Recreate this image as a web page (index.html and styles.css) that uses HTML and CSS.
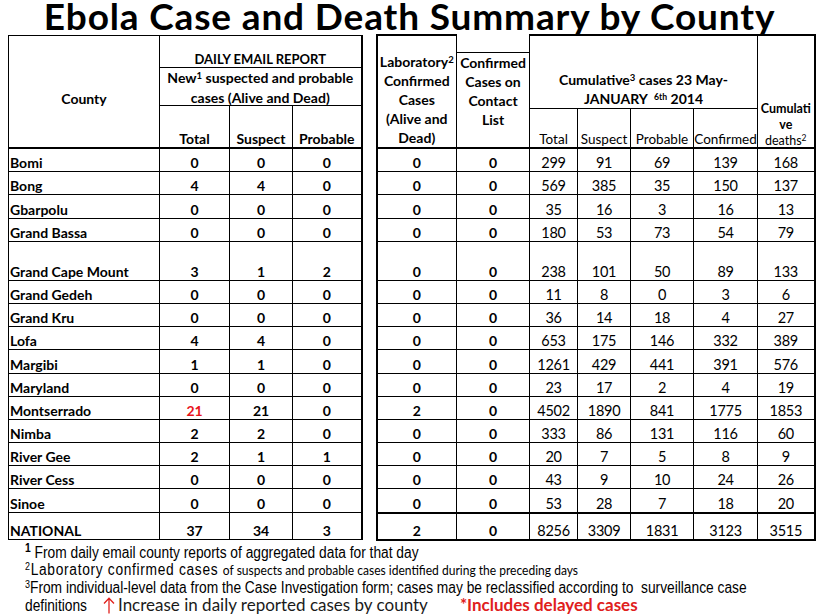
FILE: index.html
```html
<!DOCTYPE html>
<html>
<head>
<meta charset="utf-8">
<title>Ebola Case and Death Summary by County</title>
<link rel="stylesheet" href="styles.css">
</head>
<body>
<div class="page">
  <h1 class="title">Ebola Case and Death Summary by County</h1>
  <div class="tables">
    <table class="tbl left">
      <colgroup><col class="w151"><col class="w70"><col class="w63"><col class="w69"></colgroup>
      <thead>
        <tr class="hA"><th rowspan="3" class="county-h">County</th><th colspan="3" class="daily">DAILY EMAIL REPORT</th></tr>
        <tr class="hB"><th colspan="3" class="newcases"><div class="pull">New<sup>1</sup> suspected and probable<br>cases (Alive and Dead)</div></th></tr>
        <tr class="hC"><th class="sub">Total</th><th class="sub">Suspect</th><th class="sub edge">Probable</th></tr>
      </thead>
      <tbody>
        <tr><td class="name">Bomi</td><td>0</td><td>0</td><td class="edge">0</td></tr>
        <tr><td class="name">Bong</td><td>4</td><td>4</td><td class="edge">0</td></tr>
        <tr><td class="name">Gbarpolu</td><td>0</td><td>0</td><td class="edge">0</td></tr>
        <tr><td class="name">Grand Bassa</td><td>0</td><td>0</td><td class="edge">0</td></tr>
        <tr class="tall"><td class="name">Grand Cape Mount</td><td>3</td><td>1</td><td class="edge">2</td></tr>
        <tr><td class="name">Grand Gedeh</td><td>0</td><td>0</td><td class="edge">0</td></tr>
        <tr><td class="name">Grand Kru</td><td>0</td><td>0</td><td class="edge">0</td></tr>
        <tr><td class="name">Lofa</td><td>4</td><td>4</td><td class="edge">0</td></tr>
        <tr><td class="name">Margibi</td><td>1</td><td>1</td><td class="edge">0</td></tr>
        <tr><td class="name">Maryland</td><td>0</td><td>0</td><td class="edge">0</td></tr>
        <tr><td class="name">Montserrado</td><td class="red">21</td><td>21</td><td class="edge">0</td></tr>
        <tr><td class="name">Nimba</td><td>2</td><td>2</td><td class="edge">0</td></tr>
        <tr><td class="name">River Gee</td><td>2</td><td>1</td><td class="edge">1</td></tr>
        <tr><td class="name">River Cess</td><td>0</td><td>0</td><td class="edge">0</td></tr>
        <tr><td class="name">Sinoe</td><td>0</td><td>0</td><td class="edge">0</td></tr>
        <tr class="nat"><td class="name">NATIONAL</td><td>37</td><td>34</td><td class="edge">3</td></tr>
      </tbody>
    </table>

    <table class="tbl right">
      <colgroup><col class="w80"><col class="w73"><col class="w48"><col class="w53"><col class="w63"><col class="w64"><col class="w57"></colgroup>
      <thead>
        <tr class="hA2">
          <th rowspan="2" class="lab">Laboratory<sup>2</sup><br>Confirmed<br>Cases<br>(Alive and<br>Dead)</th>
          <th rowspan="2" class="contact"><div class="contact-in">Confirmed<br>Cases on<br>Contact<br>List</div></th>
          <th colspan="4" class="cum">Cumulative<sup>3</sup> cases 23 May-<br>JANUARY&nbsp; <sup class="th">6th</sup> 2014</th>
          <th rowspan="2" class="deaths"><div class="pull"><b>Cumulati<br>ve</b><br>deaths<sup>2</sup></div></th>
        </tr>
        <tr class="hB2"><th class="sub2">Total</th><th class="sub2">Suspect</th><th class="sub2">Probable</th><th class="sub2">Confirmed</th></tr>
      </thead>
      <tbody>
        <tr><td class="lab-c">0</td><td class="b">0</td><td>299</td><td>91</td><td>69</td><td>139</td><td class="rend">168</td></tr>
        <tr><td class="lab-c">0</td><td class="b">0</td><td>569</td><td>385</td><td>35</td><td>150</td><td class="rend">137</td></tr>
        <tr><td class="lab-c">0</td><td class="b">0</td><td>35</td><td>16</td><td>3</td><td>16</td><td class="rend">13</td></tr>
        <tr><td class="lab-c">0</td><td class="b">0</td><td>180</td><td>53</td><td>73</td><td>54</td><td class="rend">79</td></tr>
        <tr class="tall"><td class="lab-c">0</td><td class="b">0</td><td>238</td><td>101</td><td>50</td><td>89</td><td class="rend">133</td></tr>
        <tr><td class="lab-c">0</td><td class="b">0</td><td>11</td><td>8</td><td>0</td><td>3</td><td class="rend">6</td></tr>
        <tr><td class="lab-c">0</td><td class="b">0</td><td>36</td><td>14</td><td>18</td><td>4</td><td class="rend">27</td></tr>
        <tr><td class="lab-c">0</td><td class="b">0</td><td>653</td><td>175</td><td>146</td><td>332</td><td class="rend">389</td></tr>
        <tr><td class="lab-c">0</td><td class="b">0</td><td>1261</td><td>429</td><td>441</td><td>391</td><td class="rend">576</td></tr>
        <tr><td class="lab-c">0</td><td class="b">0</td><td>23</td><td>17</td><td>2</td><td>4</td><td class="rend">19</td></tr>
        <tr><td class="lab-c">2</td><td class="b">0</td><td>4502</td><td>1890</td><td>841</td><td>1775</td><td class="rend">1853</td></tr>
        <tr><td class="lab-c">0</td><td class="b">0</td><td>333</td><td>86</td><td>131</td><td>116</td><td class="rend">60</td></tr>
        <tr><td class="lab-c">0</td><td class="b">0</td><td>20</td><td>7</td><td>5</td><td>8</td><td class="rend">9</td></tr>
        <tr><td class="lab-c">0</td><td class="b">0</td><td>43</td><td>9</td><td>10</td><td>24</td><td class="rend">26</td></tr>
        <tr><td class="lab-c">0</td><td class="b">0</td><td>53</td><td>28</td><td>7</td><td>18</td><td class="rend">20</td></tr>
        <tr class="nat nat2"><td class="lab-c">2</td><td class="b">0</td><td>8256</td><td>3309</td><td>1831</td><td>3123</td><td class="rend">3515</td></tr>
      </tbody>
    </table>
  </div>

  <div class="notes">
    <div class="note cond"><sup class="n1">1</sup> From daily email county reports of aggregated data for that day</div>
    <div class="note cond"><span class="n2"><sup>2</sup>Laboratory confirmed cases </span><span class="small">of suspects and probable cases identified during the preceding days</span></div>
    <div class="note cond"><sup>3</sup>From individual-level data from the Case Investigation form; cases may be reclassified according to&nbsp; surveillance case</div>
    <div class="note last"><span class="narrow defs">definitions</span><svg class="arrow" width="12" height="17" viewBox="0 0 12 17"><path d="M6 16.5V1.5M1 6.5L6 1.2L11 6.5" fill="none" stroke="#e0201c" stroke-width="1.3"/></svg><span class="inc">Increase in daily reported cases by county</span><span class="delayed">*Includes delayed cases</span></div>
  </div>
</div>
</body>
</html>
```

FILE: styles.css
```css
html, body {
  margin: 0;
  padding: 0;
  background: #ffffff;
}

body {
  font-family: Lato, "Open Sans", sans-serif;
  color: #000000;
}

.page {
  width: 819px;
  height: 616px;
  overflow: hidden;
}

.title {
  margin: 0;
  height: 34px;
  font-size: 37px;
  line-height: 31px;
  font-weight: 700;
  text-align: center;
  letter-spacing: 0.85px;
  white-space: nowrap;
}

.tables {
  display: flex;
  align-items: flex-start;
  padding-left: 8px;
}

.tbl {
  border-collapse: collapse;
  table-layout: fixed;
  font-size: 14px;
}

.left {
  width: 353px;
  margin-top: 1px;
}

.right {
  width: 438px;
  margin-left: 13px;
}

.w151 { width: 151px; }
.w70 { width: 70px; }
.w63 { width: 63px; }
.w69 { width: 69px; }
.w80 { width: 80px; }
.w73 { width: 73px; }
.w48 { width: 48px; }
.w53 { width: 53px; }
.w64 { width: 64px; }
.w57 { width: 57px; }

.tbl th,
.tbl td {
  border: 1px solid #000;
  padding: 0;
  text-align: center;
  vertical-align: bottom;
  overflow: visible;
  white-space: nowrap;
}

.tbl sup {
  font-size: 0.68em;
  line-height: 0;
  vertical-align: 0.45em;
}

.pull {
  margin-bottom: -2px;
}

/* left table header */
.hA th { height: 31px; }
.hB th { height: 37px; }
.hC th { height: 41px; border-bottom: 2px solid #000; }

.county-h {
  vertical-align: top !important;
  padding-top: 54px !important;
  font-size: 14px;
  border-bottom: 2px solid #000 !important;
}

.daily {
  font-size: 13px;
  line-height: 16px;
}

.newcases {
  font-size: 14px;
  line-height: 19.5px;
}

.sub {
  font-size: 14px;
  line-height: 16px;
}

.left .edge { border-right: 2px solid #000; }
.left th.daily, .left th.newcases { border-right: 2px solid #000; }

.left td {
  height: 22.2px;
  font-weight: 700;
  line-height: 16px;
}

.left td.name {
  text-align: left;
  padding-left: 1px;
}

.tall td { height: 38px !important; }
.nat td { height: 25px !important; }
.left .nat td { height: 26px !important; }

.red { color: #e8141c; }

/* right table header */
.hA2 th {
  height: 72px;
  border-top: 2px solid #000;
}
.hB2 th {
  height: 38px;
  border-bottom: 2px solid #000;
}

.lab {
  font-size: 14px;
  line-height: 19px;
  border-left: 2px solid #000 !important;
  border-bottom: 2px solid #000 !important;
}

.contact {
  vertical-align: top !important;
  border-top: none !important;
  border-bottom: 2px solid #000 !important;
  font-size: 14px;
  line-height: 19px;
}

.contact-in {
  margin-top: 17px;
  border-top: 1px solid #000;
}

.cum {
  font-size: 14px;
  line-height: 19px;
}

.cum .th {
  font-size: 0.62em;
  vertical-align: 0.5em;
}

.sub2 {
  font-weight: 400;
  font-size: 13.5px;
  line-height: 16px;
}

.deaths {
  font-weight: 400;
  font-size: 12.5px;
  line-height: 16px;
  border-right: 2px solid #000 !important;
  border-bottom: 2px solid #000 !important;
}

.right td {
  height: 22.2px;
  line-height: 16px;
  font-size: 14.5px;
  letter-spacing: -0.3px;
}

.right td.lab-c {
  border-left: 2px solid #000;
  font-weight: 700;
  font-size: 14px;
  letter-spacing: 0;
}

.right td.b {
  font-weight: 700;
  font-size: 14px;
  letter-spacing: 0;
}

.right td.rend { border-right: 2px solid #000; }

.nat2 td {
  border-top: 2px solid #000;
  border-bottom: 2px solid #000;
}

/* notes */
.notes {
  padding-left: 25px;
  margin-top: 3px;
  font-family: "Liberation Sans", Arial, sans-serif;
  font-size: 16px;
  line-height: 17.7px;
  white-space: nowrap;
}

.note {
  height: 17.7px;
}

.cond {
  transform: scaleX(0.86);
  transform-origin: 0 0;
}

.narrow {
  display: inline-block;
  transform: scaleX(0.86);
  transform-origin: 0 50%;
}

.note sup {
  font-size: 0.65em;
  line-height: 0;
  vertical-align: 0.5em;
}

.note .n1 {
  font-weight: 700;
  font-size: 0.75em;
}

.n2 {
  font-size: 16px;
  letter-spacing: 0.8px;
}

.small {
  font-family: Lato, "Open Sans", sans-serif;
  font-size: 14px;
  letter-spacing: 0;
}

.note.last {
  display: flex;
  align-items: flex-end;
}

.defs {
  width: 73px;
}

.arrow {
  display: block;
  flex: none;
  margin-left: 5px;
  margin-bottom: 0;
}

.inc {
  font-family: Lato, "Open Sans", sans-serif;
  font-size: 17px;
  line-height: 18px;
  color: #1a1a1a;
  margin-left: 3px;
}

.delayed {
  font-family: Lato, "Open Sans", sans-serif;
  font-weight: 700;
  font-size: 17px;
  line-height: 18px;
  color: #e0201c;
  margin-left: 32px;
}
```
